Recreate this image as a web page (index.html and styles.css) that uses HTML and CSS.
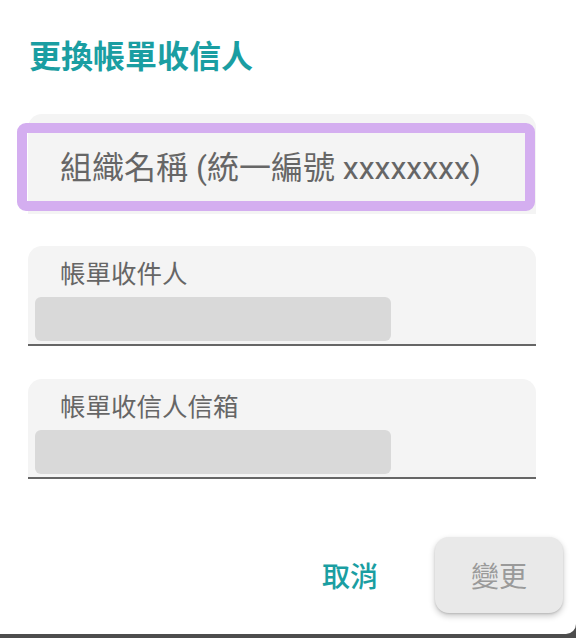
FILE: index.html
```html
<!DOCTYPE html>
<html lang="zh-Hant">
<head>
<meta charset="utf-8">
<title>更換帳單收信人</title>
<link rel="stylesheet" href="styles.css">
</head>
<body>
<div class="dialog">
  <h1 class="title">更換帳單收信人</h1>
  <div class="fields">
    <div class="field field-focused">
      <div class="value">組織名稱 (統一編號 xxxxxxxx)</div>
      <div class="focus-ring"></div>
    </div>
    <div class="field field-filled">
      <div class="label">帳單收件人</div>
      <div class="skeleton"></div>
    </div>
    <div class="field field-filled field-last">
      <div class="label">帳單收信人信箱</div>
      <div class="skeleton"></div>
    </div>
  </div>
  <div class="actions">
    <button class="btn-text">取消</button>
    <button class="btn-raised">變更</button>
  </div>
</div>
</body>
</html>
```
FILE: styles.css
```css
html, body {
  margin: 0;
  padding: 0;
}
body {
  background: #4d4d4d;
  width: 576px;
  height: 638px;
  overflow: hidden;
  font-family: Roboto, "Noto Sans CJK TC", sans-serif;
}
.dialog {
  width: 576px;
  height: 634px;
  background: #ffffff;
  border-bottom-right-radius: 10px;
  box-sizing: border-box;
  padding: 38px 40px 0 28px;
  display: flex;
  flex-direction: column;
}
.title {
  margin: 0 0 0 1px;
  font-size: 32px;
  line-height: 38px;
  font-weight: 700;
  color: #1a9ea2;
}
.fields {
  margin-top: 38px;
  display: flex;
  flex-direction: column;
  gap: 32px;
}
.field {
  position: relative;
  background: #f4f4f4;
  border-radius: 14px 14px 0 0;
  height: 100px;
  box-sizing: border-box;
}
.field-last {
  margin-top: 1px;
}
.field-focused {
  display: flex;
  align-items: center;
  padding: 8px 0 0 32px;
}
.value {
  font-size: 32px;
  line-height: 40px;
  color: #666666;
  white-space: nowrap;
}
.focus-ring {
  position: absolute;
  left: -11px;
  top: 9px;
  width: 518px;
  height: 88px;
  box-sizing: border-box;
  border: 10px solid #d4aef0;
  border-radius: 9px;
}
.field-filled {
  border-bottom: 2px solid #666666;
  padding: 13px 0 3px 7px;
  display: flex;
  flex-direction: column;
}
.label {
  padding-left: 25px;
  font-size: 25.5px;
  line-height: 30px;
  color: #666666;
}
.skeleton {
  margin-top: 8px;
  width: 356px;
  height: 44px;
  background: #d9d9d9;
  border-radius: 6px;
}
.actions {
  margin-top: auto;
  margin-right: -27px;
  margin-bottom: 21px;
  display: flex;
  justify-content: flex-end;
  align-items: center;
  gap: 41px;
}
.btn-text {
  border: 0;
  background: transparent;
  padding: 0 16px;
  font-family: inherit;
  font-size: 28px;
  font-weight: 500;
  color: #1a9ea2;
}
.btn-raised {
  border: 0;
  width: 128px;
  height: 76px;
  border-radius: 14px;
  background: #e9e9e9;
  box-shadow: 0 3px 6px rgba(0, 0, 0, 0.22), 0 1px 2px rgba(0, 0, 0, 0.12);
  font-family: inherit;
  font-size: 28px;
  font-weight: 400;
  color: #9a9a9a;
}
```
